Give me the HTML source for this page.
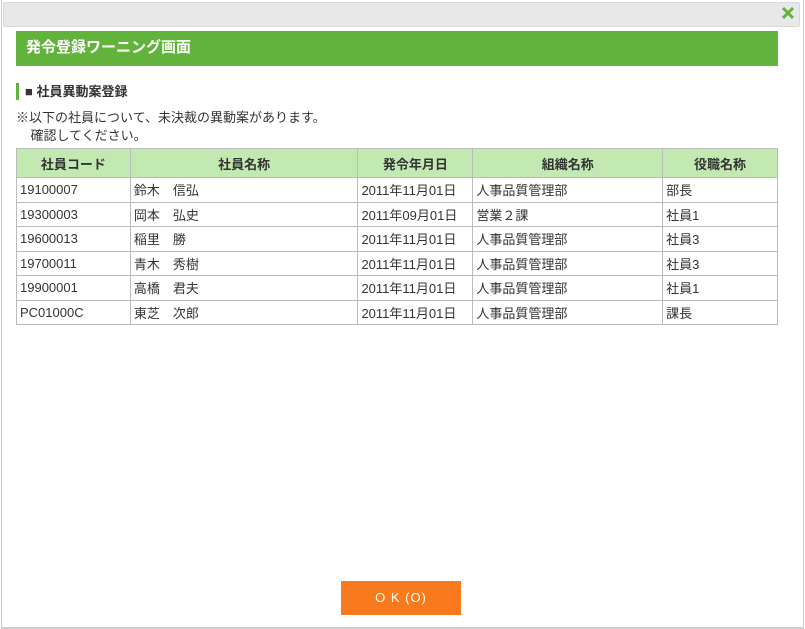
<!DOCTYPE html>
<html><head><meta charset="utf-8"><style>
*{margin:0;padding:0;box-sizing:border-box}
body{width:805px;height:629px;background:#fff;font-family:"Liberation Sans","Noto Sans CJK JP",sans-serif;font-size:13px;color:#333;position:relative;overflow:hidden}
.frame{position:absolute;left:1px;top:0;width:803px;height:629px;border-left:1px solid #ccc;border-right:1px solid #ccc;border-bottom:2px solid #ccc}
.tb{position:absolute;left:3px;top:2px;width:797px;height:25px;background:#e8e8e8;border:1px solid #d8d8d8;border-radius:2px}
.x{position:absolute;left:780px;top:5px}
.gb{position:absolute;left:16px;top:31px;width:762px;height:35px;background:#62b33c;color:#fff;font-weight:bold;font-size:15px;line-height:33px;padding-left:10px}
.sec{position:absolute;left:16px;top:83px;height:17px;border-left:3px solid #62b33c;padding-left:6px;font-weight:bold;font-size:13px;line-height:17px}
.msg{position:absolute;left:16px;top:109px;line-height:18px;font-size:13px}
table{position:absolute;left:16px;top:148px;border-collapse:collapse;width:762px}
td,th{border:1px solid #bbb;padding:0 3px;font-size:13px;white-space:nowrap}
th{background:#c3e9b2;height:29px;font-weight:bold;text-align:center}
td{height:24.5px;color:#333}
.btn{position:absolute;left:341px;top:581px;width:120px;height:34px;background:#f97a1c;color:#fff;text-align:center;line-height:34px;font-size:13px;letter-spacing:1px}
</style></head><body>
<div class="frame"></div>
<div class="tb"></div>
<svg class="x" width="16" height="16" viewBox="0 0 16 16"><path d="M3 3L13 13M13 3L3 13" stroke="#62b33c" stroke-width="3"/></svg>
<div class="gb">発令登録ワーニング画面</div>
<div class="sec">■ 社員異動案登録</div>
<div class="msg">※以下の社員について、未決裁の異動案があります。<br>&nbsp;&nbsp;&nbsp;&nbsp;確認してください。</div>
<table>
<colgroup><col style="width:114px"><col style="width:228px"><col style="width:115px"><col style="width:190px"><col style="width:115px"></colgroup>
<tr><th>社員コード</th><th>社員名称</th><th>発令年月日</th><th>組織名称</th><th>役職名称</th></tr>
<tr><td>19100007</td><td>鈴木　信弘</td><td>2011年11月01日</td><td>人事品質管理部</td><td>部長</td></tr>
<tr><td>19300003</td><td>岡本　弘史</td><td>2011年09月01日</td><td>営業２課</td><td>社員1</td></tr>
<tr><td>19600013</td><td>稲里　勝</td><td>2011年11月01日</td><td>人事品質管理部</td><td>社員3</td></tr>
<tr><td>19700011</td><td>青木　秀樹</td><td>2011年11月01日</td><td>人事品質管理部</td><td>社員3</td></tr>
<tr><td>19900001</td><td>高橋　君夫</td><td>2011年11月01日</td><td>人事品質管理部</td><td>社員1</td></tr>
<tr><td>PC01000C</td><td>東芝　次郎</td><td>2011年11月01日</td><td>人事品質管理部</td><td>課長</td></tr>
</table>
<div class="btn">O K (O)</div>
</body></html>
